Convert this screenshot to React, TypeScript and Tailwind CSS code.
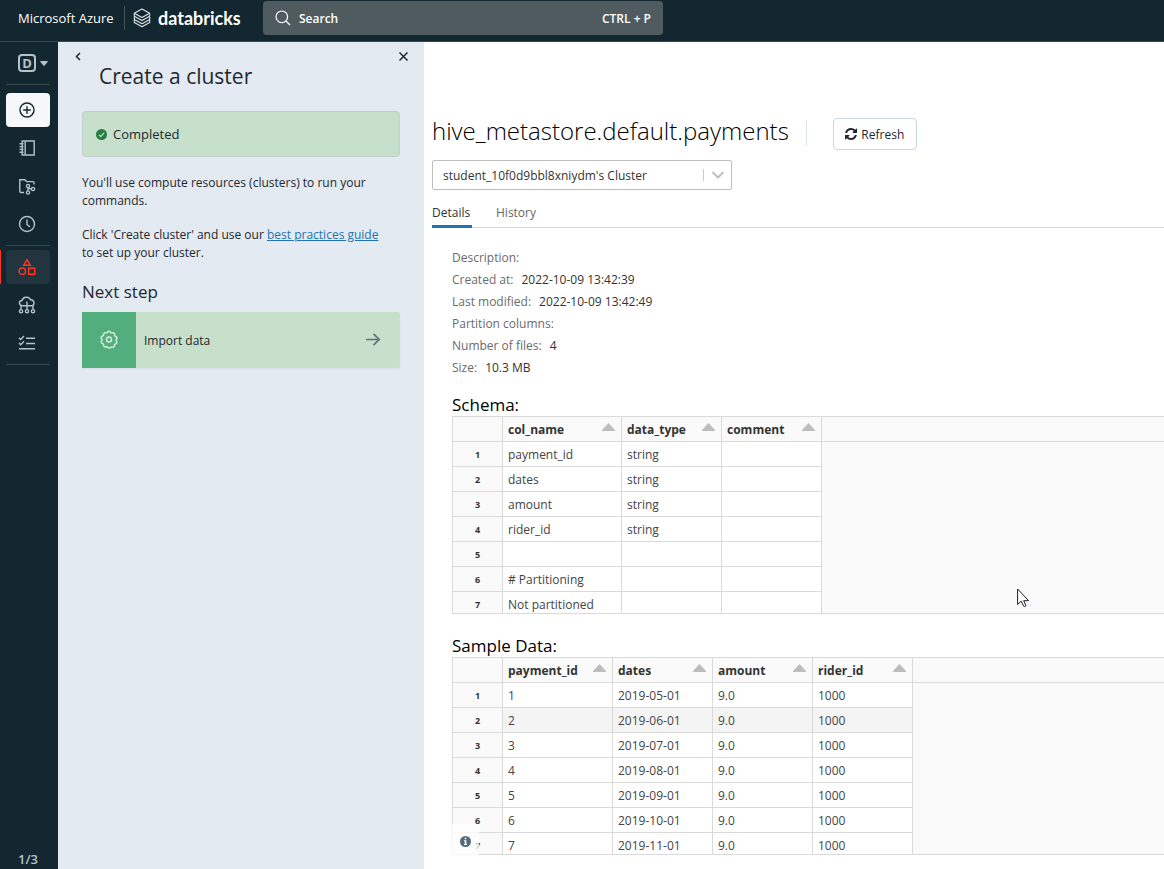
import React from "react";

type Column = { label: string; width: string };

const schemaColumns: Column[] = [
  { label: "col_name", width: "w-[119px]" },
  { label: "data_type", width: "w-[100px]" },
  { label: "comment", width: "w-[100px]" },
];
const schemaRows = [
  ["payment_id", "string", ""],
  ["dates", "string", ""],
  ["amount", "string", ""],
  ["rider_id", "string", ""],
  ["", "", ""],
  ["# Partitioning", "", ""],
  ["Not partitioned", "", ""],
];

const sampleColumns: Column[] = [
  { label: "payment_id", width: "w-[110px]" },
  { label: "dates", width: "w-[100px]" },
  { label: "amount", width: "w-[100px]" },
  { label: "rider_id", width: "w-[100px]" },
];
const sampleRows = [
  ["1", "2019-05-01", "9.0", "1000"],
  ["2", "2019-06-01", "9.0", "1000"],
  ["3", "2019-07-01", "9.0", "1000"],
  ["4", "2019-08-01", "9.0", "1000"],
  ["5", "2019-09-01", "9.0", "1000"],
  ["6", "2019-10-01", "9.0", "1000"],
  ["7", "2019-11-01", "9.0", "1000"],
];

const details = [
  ["Description:", ""],
  ["Created at:", "2022-10-09 13:42:39"],
  ["Last modified:", "2022-10-09 13:42:49"],
  ["Partition columns:", ""],
  ["Number of files:", "4"],
  ["Size:", "10.3 MB"],
];

function BrandMark() {
  return (
    <svg width="18" height="20" viewBox="0 0 18 20" fill="none" stroke="#dfe5e8" strokeWidth="1.1" strokeLinejoin="round">
      <path d="M1.3 5.2 9 1l7.7 4.2L9 9.5z" />
      <path d="M1.3 5.4v2.9L9 12.6l7.7-4.3V6.2" />
      <path d="M1.3 8.6v2.8L9 15.7l7.7-4.3V9" />
      <path d="M1.3 11.7v2.7L9 18.7l7.7-4.3v-2.3" />
    </svg>
  );
}

function NavIcon({ children }: { children: React.ReactNode }) {
  return (
    <svg width="18" height="18" viewBox="0 0 18 18" fill="none" stroke="currentColor" strokeWidth="1.4">
      {children}
    </svg>
  );
}

function NavButton({ label, className, children }: { label: string; className: string; children: React.ReactNode }) {
  return (
    <button aria-label={label} className={"flex h-[34px] w-11 items-center justify-center rounded pr-0.5 " + className}>
      <NavIcon>{children}</NavIcon>
    </button>
  );
}

function Sidebar() {
  return (
    <nav className="flex w-[58px] shrink-0 flex-col bg-[#12272f] text-[#b4c2c9]">
      <button aria-label="Workspace" className="flex h-[42px] items-center gap-1 pl-[18px]">
        <span className="flex size-[18px] items-center justify-center rounded border-2 border-current text-[13px] leading-none font-bold">
          D
        </span>
        <svg width="8" height="5" viewBox="0 0 8 5" fill="currentColor">
          <path d="M.8 0h6.4q.8 0 .6.8L4.6 4.6q-.6.6-1.2 0L.2.8Q0 0 .8 0z" />
        </svg>
      </button>
      <hr className="mx-1.5 mt-0 w-11 border-[#37484f]" />
      <div className="mt-2 flex flex-col items-center gap-1 pr-0.5">
        <NavButton label="Create" className="bg-[#f5f7f8] text-[#12272f]">
          <circle cx="9" cy="9" r="7" />
          <path d="M9 5.2v7.6M5.2 9h7.6" />
        </NavButton>
        <NavButton label="Workspace browser" className="">
          <path d="M4.2 2h12v14h-12zM7.2 2v14M1.5 4.8h4M1.5 7.6h4M1.5 10.4h4M1.5 13.2h4" />
        </NavButton>
        <NavButton label="Repos" className="">
          <path d="M6 15.5H3a1.2 1.2 0 0 1-1.2-1.2V2.7h5L8.600 4.600h6.500q.9 0 .9.900v2" />
          <circle cx="10" cy="9" r="1.6" />
          <circle cx="10" cy="15.500" r="1.600" />
          <circle cx="15" cy="12" r="1.600" />
          <path d="M10 10.600v3.300M10.400 10.500q.8 1.500 3 1.500" />
        </NavButton>
        <NavButton label="Recents" className="">
          <circle cx="9" cy="9" r="7.500" />
          <path d="M9 4.500v5l3 2.500" />
        </NavButton>
      </div>
      <hr className="mx-1.5 mt-1 w-11 border-[#37484f]" />
      <div className="mt-1 flex flex-col items-center gap-1">
        <div className="flex w-full border-l border-[#ff3621] pl-[5px]">
          <NavButton label="Data" className="bg-[#22353e] text-[#ff3621]">
            <path d="M9 1.700 12.300 7.300H5.700z" />
            <circle cx="4.300" cy="13.200" r="3.200" />
            <path d="M10.700 10.200h6v6h-6z" />
          </NavButton>
        </div>
        <div className="flex flex-col gap-1 pr-0.5">
          <NavButton label="Compute" className="">
            <path d="M3.500 9.500C.5 8.500 1 4.500 4 4.500 5 .500 11 0 12.500 3.800c4 0 4.500 4.700 2 5.700" />
            <path d="M9 5.500v8M3 13.500V9.700h12v3.800" />
            <circle cx="3" cy="15.200" r="1.600" />
            <circle cx="9" cy="15.200" r="1.600" />
            <circle cx="15" cy="15.200" r="1.600" />
          </NavButton>
          <NavButton label="Workflows" className="">
            <path d="M8 4.200h9M8 9.500h9M1 14.800h16M1 3.700 2.700 5.400 6 2M1 9l1.700 1.700L6 7.300" />
          </NavButton>
        </div>
      </div>
      <hr className="mx-1.5 mt-1 w-11 border-[#37484f]" />
      <span className="mt-auto pl-[18px] text-[13px] leading-5 font-semibold">1/3</span>
    </nav>
  );
}

function TopBar() {
  return (
    <header className="flex h-[42px] shrink-0 items-start border-b border-[#37484f] bg-[#12272f] text-white">
      <a href="#azure" className="ml-[18px] w-[106px] text-[13px] leading-9 whitespace-nowrap">
        Microsoft Azure
      </a>
      <span className="mt-1.5 h-6 w-px bg-[#42535a]" />
      <a href="#home" className="ml-2 flex h-9 w-[130px] items-center gap-[7px]">
        <BrandMark />
        <span className="font-['Lato',sans-serif] text-[18px] leading-none font-bold">databricks</span>
      </a>
      <button className="mt-px flex h-[34px] w-[400px] items-center rounded bg-[#505b60] px-3 text-[12px] font-semibold">
        <svg width="16" height="16" viewBox="0 0 16 16" fill="none" stroke="currentColor" strokeWidth="1.200">
          <circle cx="6.800" cy="6.800" r="5.800" />
          <path d="m11 11 4 4" />
        </svg>
        <span className="ml-2 pt-0.5">Search</span>
        <span className="ml-auto pt-0.5">CTRL + P</span>
      </button>
    </header>
  );
}

function GuidePanel() {
  return (
    <aside className="w-[366px] shrink-0 bg-[#e3eaf1] text-[#1f272d]">
      <div className="flex h-[22px] items-start justify-between pt-2 pr-[15px] pl-4">
        <button aria-label="Back">
          <svg width="8" height="13" viewBox="0 0 8 13" fill="none" stroke="currentColor" strokeWidth="1.500">
            <path d="M6 3 2.500 6.500 6 10" />
          </svg>
        </button>
        <button aria-label="Close">
          <svg width="11" height="13" viewBox="0 0 11 13" fill="none" stroke="currentColor" strokeWidth="1.500">
            <path d="m1.500 2.500 8 8M9.500 2.500l-8 8" />
          </svg>
        </button>
      </div>
      <div className="px-6">
        <h1 className="pl-[17px] text-[21px] leading-6 font-medium">Create a cluster</h1>
        <div className="mt-[23px] flex h-[46px] items-center gap-1.5 rounded border border-[#c0cfcb] bg-[#c7e0cc] px-[13px] text-[13px] font-medium">
          <svg width="11" height="11" viewBox="0 0 11 11" fill="none">
            <circle cx="5.500" cy="5.500" r="5.500" fill="#277c43" />
            <path d="m2.800 5.700 2 2 3.500-4" stroke="#c7e0cc" strokeWidth="1.200" />
          </svg>
          <span className="pt-0.5">Completed</span>
        </div>
        <p className="mt-[17px] pr-2 text-[12px] leading-[18px]">
          You'll use compute resources (clusters) to run your commands.
        </p>
        <p className="mt-4 pr-2 text-[12px] leading-[18px]">
          Click 'Create cluster' and use our{" "}
          <a href="#guide" className="text-[#2272b4] underline">
            best practices guide
          </a>{" "}
          to set up your cluster.
        </p>
        <h2 className="mt-[18px] text-[17px] leading-6 font-medium">Next step</h2>
        <button className="mt-2 flex h-14 w-full items-center rounded-r-xs bg-[#c7e0cc] text-left text-[12px] shadow-xs">
          <span className="flex h-14 w-[54px] items-center justify-center bg-[#52ae7d] text-[#d5eadb]">
            <svg width="18" height="20" viewBox="0 0 18 20" fill="none" stroke="currentColor" strokeWidth="1.500">
              <path d="M9 1.200c1.400 0 1.300 1.300 2.200 1.600s1.800-.6 2.900.3.200 1.900.7 2.700 1.900.7 2.200 2-1 1.500-1 2.400 1.200 1.300.8 2.600-1.700 1-2.200 1.800.1 1.800-1 2.500-1.700-.2-2.600.1S10.400 18 9 18s-1.200-1-2.100-1.300-1.700.7-2.700-.1-.2-1.800-.8-2.500-1.800-.4-2.200-1.700.9-1.500.9-2.500S.8 8.500 1.200 7.200s1.700-1 2.200-1.700 0-1.900 1-2.600 1.700.2 2.500-.1S7.600 1.200 9 1.200z" />
              <circle cx="9" cy="9.600" r="2.500" />
            </svg>
          </span>
          <span className="ml-2 pt-0.5">Import data</span>
          <svg className="mr-[19px] ml-auto text-[#5f727e]" width="15" height="14" viewBox="0 0 15 14" fill="none" stroke="currentColor" strokeWidth="1.700">
            <path d="M0 6.500h13M7.500.8l5.700 5.700-5.700 5.700" />
          </svg>
        </button>
      </div>
    </aside>
  );
}

function DataGrid({ columns, rows, hovered }: { columns: Column[]; rows: string[][]; hovered?: number }) {
  return (
    <div className="h-[198px] overflow-hidden border-y border-l border-[#dadada] bg-[#fafafa]">
      <table className="w-full table-fixed border-separate border-spacing-0 text-left text-[12px] leading-[22px] text-[#333]">
        <thead>
          <tr>
            <th className="h-[25px] w-[50px] border-r border-b border-[#dadada] p-0" />
            {columns.map((c) => (
              <th key={c.label} className={"h-[25px] border-r border-b border-[#dadada] px-[5px] pt-0.5 pb-0 font-bold " + c.width}>
                <div className="flex h-[22px] justify-between">
                  {c.label}
                  <svg className="mt-1" width="14" height="8" viewBox="0 0 14 8" fill="#bdbdbd">
                    <path d="M6.500 0 13 7v1H0V7z" />
                  </svg>
                </div>
              </th>
            ))}
            <th className="h-[25px] border-b border-[#dadada] p-0" />
          </tr>
        </thead>
        <tbody>
          {rows.map((r, i) => (
            <tr key={i}>
              <th className="h-[25px] border-r border-b border-[#dadada] px-0 pt-0.5 pb-0 text-center text-[9px] font-bold">{i + 1}</th>
              {r.map((v, j) => (
                <td
                  key={j}
                  className={
                    "h-[25px] border-r border-b border-[#dadada] px-[5px] pt-0.5 pb-0 text-[#444] " + (i === hovered ? "bg-[#f4f4f4]" : "bg-white")
                  }
                >
                  {v}
                </td>
              ))}
              <td className="p-0" />
            </tr>
          ))}
        </tbody>
      </table>
    </div>
  );
}

function TablePage() {
  return (
    <main className="min-w-0 flex-1 bg-white pt-[76px] pl-2 text-[#333]">
      <div className="flex h-8 items-start">
        <h1 className="text-[24px] leading-[26px] font-light whitespace-nowrap text-black">hive_metastore.default.payments</h1>
        <span className="mt-0.5 ml-[17px] h-[26px] w-px bg-[#dde3e8]" />
        <button className="ml-[26px] flex h-8 w-[84px] items-center justify-center gap-1 rounded border border-[#c9d8e5] text-[12px] text-[#1f272d]">
          <svg width="12" height="12" viewBox="0 0 1536 1536" fill="currentColor">
            <path d="M1511 928q0 5-1 7-64 268-268 434.500t-478 166.500q-146 0-282.500-55t-243.500-157l-129 129q-19 19-45 19t-45-19-19-45v-448q0-26 19-45t45-19h448q26 0 45 19t19 45-19 45l-137 137q71 66 161 102t187 36q134 0 250-65t186-179q11-17 53-117 8-23 30-23h192q13 0 22.500 9.500t9.500 22.500zm25-800v448q0 26-19 45t-45 19h-448q-26 0-45-19t-19-45 19-45l138-138q-148-137-349-137-134 0-250 65t-186 179q-11 17-53 117-8 23-30 23h-199q-13 0-22.500-9.500t-9.500-22.500v-7q65-268 270-434.500t480-166.500q146 0 284 55.500t245 156.500l130-129q19-19 45-19t45 19 19 45z" />
          </svg>
          <span className="pt-0.5">Refresh</span>
        </button>
      </div>
      <div className="relative mt-2.5 h-[30px] w-[300px]">
        <select
          aria-label="Cluster"
          className="size-full appearance-none rounded-xs border border-[#bfbfbf] bg-white pt-0.5 pl-2.5 text-[12px] text-[#333]"
        >
          <option>student_10f0d9bbl8xniydm's Cluster</option>
        </select>
        <span className="pointer-events-none absolute inset-y-0 right-[7px] flex items-center gap-[7px]">
          <span className="h-3 w-px bg-[#ccc]" />
          <svg width="14" height="8" viewBox="0 0 14 8" fill="none" stroke="#bfbfbf" strokeWidth="2">
            <path d="m1.500 1 5.500 5.500L12.500 1" />
          </svg>
        </span>
      </div>
      <div role="tablist" className="flex h-[38px] items-end gap-6 border-b border-[#dadada] text-[12px] leading-5">
        <button role="tab" aria-selected="true" className="-mb-px w-10 border-b-3 border-[#2272b4] pb-0.5 text-left font-medium">
          Details
        </button>
        <button role="tab" aria-selected="false" className="pb-1 text-[#666]">
          History
        </button>
      </div>
      <section className="pt-[19px] pl-5">
        <dl className="text-[12px] leading-[22px]">
          {details.map(([k, v]) => (
            <div key={k} className="flex gap-2">
              <dt className="text-[#6b6b6b]">{k}</dt>
              <dd>{v}</dd>
            </div>
          ))}
        </dl>
        <h2 className="mt-[15px] text-[17px] leading-[22px] text-black">Schema:</h2>
        <DataGrid columns={schemaColumns} rows={schemaRows} />
        <h2 className="mt-[21px] text-[17px] leading-[22px] text-black">Sample Data:</h2>
        <div className="relative">
          <DataGrid columns={sampleColumns} rows={sampleRows} hovered={1} />
          <div className="absolute bottom-0 left-0 flex h-[31px] w-[27px] items-center justify-center bg-white/75 pt-1">
            <svg width="11" height="11" viewBox="0 0 11 11">
              <circle cx="5.500" cy="5.500" r="5.500" fill="#526b7c" />
              <path d="M4.700 1.700h1.600v1.500H4.700zM4 4.300h2.400v3.600H7v1H4v-1h.7V5.300H4z" fill="#fff" />
            </svg>
          </div>
        </div>
      </section>
    </main>
  );
}

export default function App() {
  return (
    <div className="relative flex min-h-screen flex-col overflow-hidden font-['Open_Sans','Noto_Sans',sans-serif]">
      <TopBar />
      <div className="flex flex-1">
        <Sidebar />
        <GuidePanel />
        <TablePage />
      </div>
      <svg className="pointer-events-none absolute top-[588px] left-[1017px]" width="13" height="20" viewBox="0 0 13 20" fill="#fff" stroke="#1b1b24" strokeWidth="1">
        <path d="M.600 1v15.500l3.600-3.300 2.500 5q1 .800 2.300-.500l-2.300-5h4.900z" />
      </svg>
    </div>
  );
}
